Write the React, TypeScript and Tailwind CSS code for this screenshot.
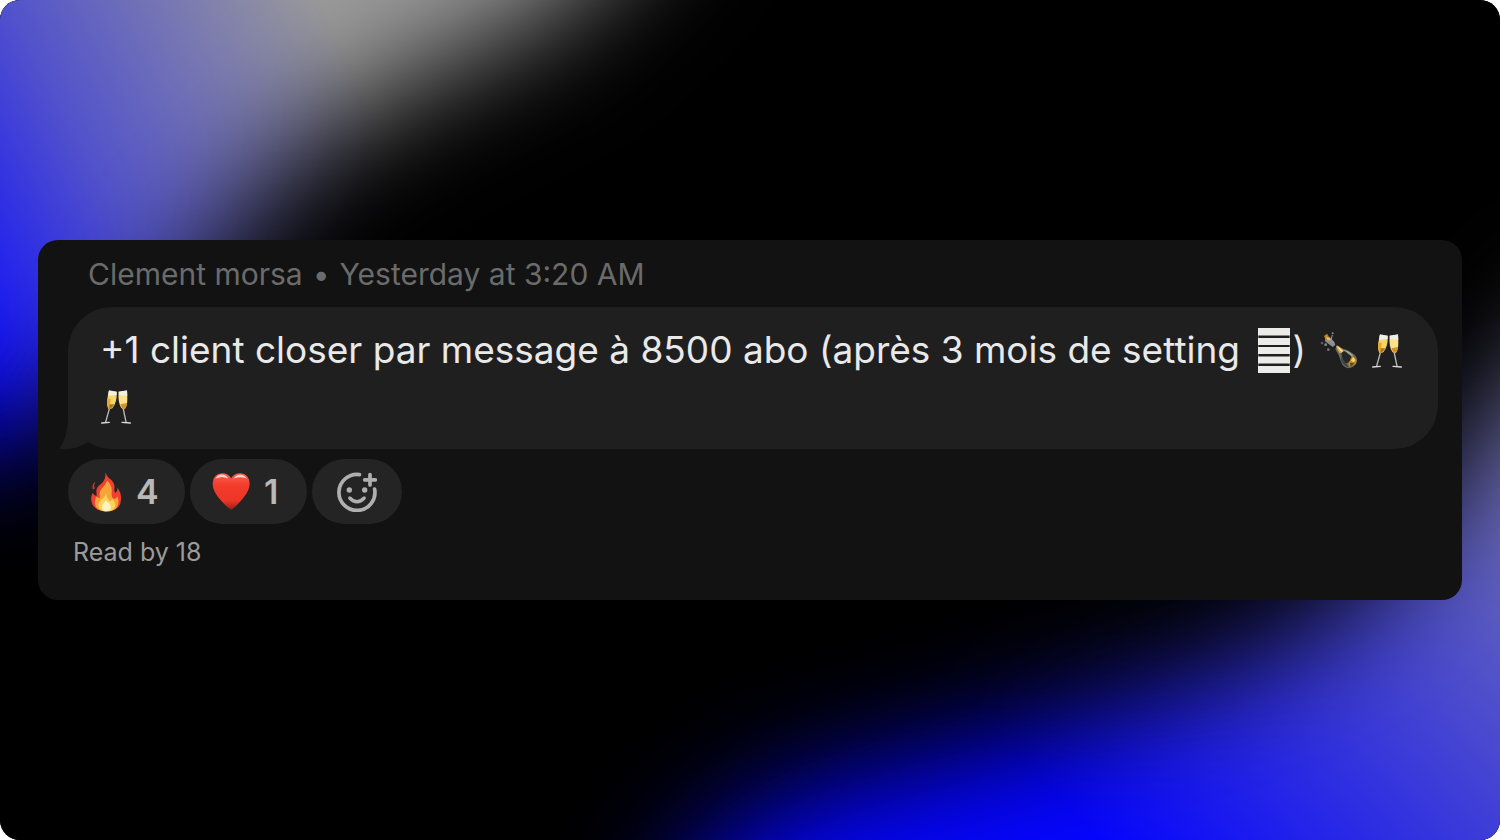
import type { ReactNode } from "react";

function Backdrop() {
  return (
    <svg
      className="absolute inset-0 h-full w-full"
      viewBox="0 0 1500 840"
      preserveAspectRatio="none"
      aria-hidden="true"
    >
      <defs>
        <linearGradient id="glow-left" gradientUnits="userSpaceOnUse" x1="-176" y1="94" x2="250" y2="-134">
          <stop offset="0" stopColor="#0a0aff" />
          <stop offset="0.42" stopColor="#5252cc" />
          <stop offset="1" stopColor="#9b9b9b" />
        </linearGradient>
        <linearGradient id="glow-right" gradientUnits="userSpaceOnUse" x1="1100" y1="840" x2="1662" y2="316">
          <stop offset="0" stopColor="#0505ff" />
          <stop offset="1" stopColor="#999999" />
        </linearGradient>
        <filter id="soften" filterUnits="userSpaceOnUse" x="-600" y="-600" width="2900" height="2200" colorInterpolationFilters="sRGB">
          <feGaussianBlur stdDeviation="60" />
        </filter>
        <mask id="mask-left" maskUnits="userSpaceOnUse" x="0" y="0" width="1500" height="840">
          <path
            d="M-400 -400H760L650 -80L550 15L430 72L330 128L260 190L200 270L110 370L0 445L-400 445Z"
            fill="#fff"
            filter="url(#soften)"
          />
        </mask>
        <mask id="mask-right" maskUnits="userSpaceOnUse" x="0" y="0" width="1500" height="840">
          <path
            d="M600 1250L680 880L780 800L1000 742L1200 685L1330 625L1420 540L1490 430L1590 310H2000V1250Z"
            fill="#fff"
            filter="url(#soften)"
          />
        </mask>
      </defs>
      <rect width="1500" height="840" fill="#000" />
      <rect width="1500" height="840" fill="url(#glow-left)" mask="url(#mask-left)" />
      <rect width="1500" height="840" fill="url(#glow-right)" mask="url(#mask-right)" />
    </svg>
  );
}

function Glasses() {
  return (
    <svg className="mb-1 inline-block h-9 w-8 align-middle" viewBox="170 36 96 108" role="img" aria-label="Clinking glasses">
      <g stroke="#b9b9b9" strokeWidth="4" strokeLinecap="round" fill="none">
        <path d="M199 92L187 135M239 92L248 135" />
        <path d="M175 138L198 136M236 136L261 138" stroke="#dcdcdc" />
      </g>
      <path d="M196 42L220 44Q222 75 207 94L197 97Q189 88 192 66Z" fill="#f7d568" />
      <path d="M251 41L226 44Q223 75 234 93L243 97Q252 88 252 66Z" fill="#fbe28a" />
      <path d="M192 64L202 66L199 96L196 97Q189 86 192 64Z" fill="#e9a62d" />
      <path d="M199 82L213 82Q208 93 198 97Z" fill="#a87419" />
      <path d="M231 82L251 78Q250 92 243 97L236 93Z" fill="#d3912c" />
      <path d="M197 40L220 44L220 54L194 57Z" fill="#f0eee9" />
      <path d="M251 40L226 44L227 54L252 57Z" fill="#f0eee9" />
    </svg>
  );
}

function Bottle() {
  return (
    <svg className="mb-1 ml-1 inline-block size-10 align-middle" viewBox="20 30 120 120" role="img" aria-label="Champagne bottle">
      <g fill="#8d8d8d">
        <path d="M36 52L50 49L63 63L66 72L58 78L46 69L35 61Z" />
        <circle cx="26" cy="66" r="4" fill="#5f5f5f" />
        <circle cx="45" cy="86" r="4" fill="#777" />
        <circle cx="37" cy="71" r="4" />
        <circle cx="58" cy="37" r="3" />
      </g>
      <path d="M57 42L52 61L62 65" fill="none" stroke="#9b9b9b" strokeWidth="3" />
      <path d="M32 45L41 38L49 51L37 56Z" fill="#c8851d" />
      <path d="M38 49L49 50L52 57L43 58Z" fill="#edbd65" />
      <path d="M70 72L86 82L103 88L124 101Q134 113 130 126Q121 141 105 142Q88 139 82 119Q78 103 66 85Z" fill="#666765" />
      <path d="M84 92L103 91L116 103L108 124L97 127Q85 115 84 92Z" fill="#252627" />
      <path d="M83 118Q92 137 106 138L99 127Q90 122 83 105Z" fill="#424342" />
      <path d="M68 76L74 74L91 88L85 97L77 95Z" fill="#d7a43e" />
      <path d="M71 77L85 92L90 91L78 80Z" fill="#fff0b5" />
      <path d="M90 86L105 91L119 102L116 107L102 96Z" fill="#aaa68d" />
      <path d="M117 103L130 118L126 130L109 138L104 129L111 116Z" fill="#b88626" />
      <path d="M119 107L127 117L121 124L113 119Z" fill="#f4cf62" />
      <path d="M110 125L123 127L112 137Z" fill="#594516" />
    </svg>
  );
}

function Bars() {
  return (
    <svg className="mr-[2px] mb-1 ml-2 inline-block h-[45px] w-8 align-middle" viewBox="0 0 32 45" fill="#ebebea" aria-hidden="true">
      <path d="M0 0H32V7.5H0ZM0 10H32V17H0ZM0 19H32V26H0ZM0 28.5H32V35.5H0ZM0 38H32V45H0Z" />
      <path d="M0 0H1V45H0ZM31 0H32V45H31Z" opacity=".35" />
    </svg>
  );
}

function Fire() {
  return (
    <svg className="h-10 w-8" viewBox="36 24 95 122" aria-hidden="true">
      <path
        d="M82 25Q85 38 98 47Q112 59 109 76Q108 84 113 87Q120 81 118 71Q132 90 129 110Q127 142 87 144Q43 144 39 112Q36 98 43 88Q48 96 54 97Q56 93 54 84Q53 71 69 60Q83 49 82 25Z"
        fill="#ef4030"
      />
      <path d="M49 55Q40 61 43 77Q52 75 48 69Q45 64 51 57Z" fill="#d3371f" />
      <path
        d="M87 50Q83 63 70 75Q61 84 65 103Q59 104 54 99Q45 117 54 132Q64 144 86 144Q110 144 118 129Q125 113 118 99Q112 109 106 105Q99 101 101 82Q102 65 87 50Z"
        fill="#f5a43a"
      />
      <path d="M83 89Q82 100 70 108Q54 121 64 136Q70 144 86 144Q108 144 112 128Q112 114 102 107Q98 117 92 110Q86 104 83 89Z" fill="#fbd45c" />
      <path d="M83 112Q68 126 72 136Q75 144 85 144Q97 143 98 132Q98 121 83 112Z" fill="#fff3c4" />
    </svg>
  );
}

function Heart() {
  return (
    <svg className="h-[37px] w-[38px]" viewBox="451 67 115 112" aria-hidden="true">
      <defs>
        <linearGradient id="heart-fill" x1="0" y1="0" x2="0" y2="1">
          <stop offset="0" stopColor="#f7604c" />
          <stop offset="0.35" stopColor="#f33b2c" />
          <stop offset="0.75" stopColor="#ee3527" />
          <stop offset="1" stopColor="#96201a" />
        </linearGradient>
      </defs>
      <path
        d="M509 178Q493 169 468 138Q453 118 453 98Q455 69 482 68Q500 68 509 83Q518 68 537 68Q563 70 565 98Q565 118 549 138Q526 168 509 178Z"
        fill="url(#heart-fill)"
      />
      <path d="M462 84Q470 70 484 72Q495 73 500 84Q481 74 462 84Z" fill="#ffd9d5" />
      <path d="M517 84Q523 72 537 72Q549 72 556 84Q537 75 517 84Z" fill="#ffd9d5" />
    </svg>
  );
}

function AddReactionIcon() {
  return (
    <svg className="size-10" viewBox="0 0 40 40" fill="none" stroke="#afafaf" strokeWidth="3.7" aria-hidden="true">
      <path d="M22.5 2.6A18 18 0 1 0 37.6 17" strokeLinecap="round" />
      <path d="M33 2.5V13M27.7 7.8H38.3" strokeLinecap="round" />
      <circle cx="12.3" cy="18" r="2.7" fill="#afafaf" stroke="none" />
      <circle cx="27.7" cy="18" r="2.7" fill="#afafaf" stroke="none" />
      <path d="M12.8 26Q20 33.6 27.2 26" strokeLinecap="round" strokeWidth="3.4" />
    </svg>
  );
}

function Reaction({ label, count, children }: { label: string; count: number; children: ReactNode }) {
  return (
    <button
      type="button"
      aria-label={`${label} ${count}`}
      className="flex h-[65px] w-[117px] items-center gap-[14px] rounded-full bg-[#242424] pl-[22px] text-[34px] font-semibold text-[#b8b8b8]"
    >
      {children}
      <span>{count}</span>
    </button>
  );
}

export default function App() {
  return (
    <div className="bg-white">
      <main className="relative flex min-h-screen items-center overflow-hidden rounded-[20px] bg-black px-[38px] font-['Inter','Liberation_Sans',sans-serif]">
        <Backdrop />
        <article className="relative w-full rounded-[20px] bg-[#121212] px-6 pt-4 pb-8">
          <header className="pl-[26px] text-[30px] leading-9 text-[#6b6b6b]">
            <span>Clement morsa</span>
            <span className="mx-[10px]">•</span>
            <time>Yesterday at 3:20 AM</time>
          </header>

          <div className="relative mt-[15px] ml-[6px] rounded-[44px] bg-[#1f1f1f] py-[15px] pr-[30px] pl-8">
            <svg className="absolute bottom-0 -left-[9px] h-[60px] w-[54px]" viewBox="0 0 54 60" aria-hidden="true">
              <path d="M9 0V31Q8 50 0 60H10Q20 59 29 53Q40 60 54 60V0Z" fill="#1f1f1f" />
            </svg>
            <p className="relative text-[37px] leading-14 text-[#e9e9e9]">
              +1 client closer par message à 8500 abo (après 3 mois de setting <Bars />) <Bottle /> <Glasses />{" "}
              <Glasses />
            </p>
          </div>

          <div className="mt-[10px] ml-[6px] flex gap-[5px]">
            <Reaction label="Fire" count={4}>
              <Fire />
            </Reaction>
            <Reaction label="Heart" count={1}>
              <Heart />
            </Reaction>
            <button
              type="button"
              aria-label="Add reaction"
              className="flex h-[65px] w-[90px] items-center justify-center rounded-full bg-[#242424]"
            >
              <AddReactionIcon />
            </button>
          </div>

          <p className="mt-3 ml-[11px] text-[25px] leading-8 text-[#9b9b9b]">Read by 18</p>
        </article>
      </main>
    </div>
  );
}
